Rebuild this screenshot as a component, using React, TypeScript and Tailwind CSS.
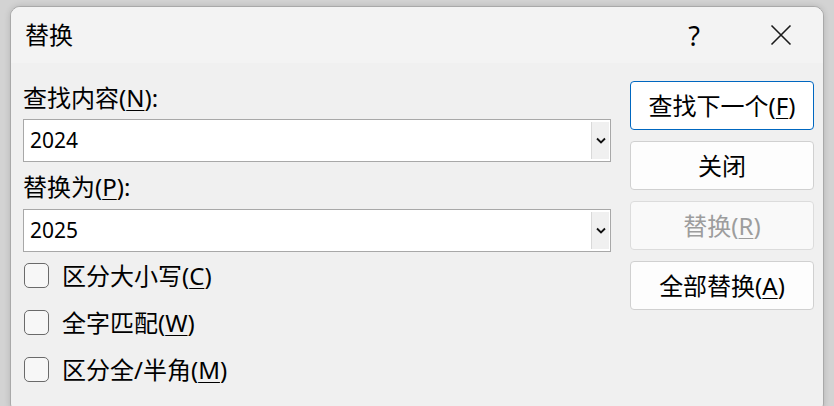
import React from 'react';

const FONT = { fontFamily: '"Noto Sans", "Noto Sans CJK SC", sans-serif' };

const Key: React.FC<{ k: string }> = ({ k }) => (
  <span className="underline decoration-1 underline-offset-[3px]">{k}</span>
);

const Combo: React.FC<{ value: string }> = ({ value }) => (
  <div className="flex h-[43px] w-full items-stretch border border-[#a8a8a8] bg-white">
    <div className="flex flex-1 items-center pl-[6px] text-[21px] text-black">{value}</div>
    <div className="my-[2px] mr-[1px] flex w-[18px] items-center justify-center border-l border-[#d9d9d9] bg-[#f0f0f0]">
      <svg width="10" height="7" viewBox="0 0 10 7">
        <path d="M1 1.5 L5 5.5 L9 1.5" fill="none" stroke="#111" strokeWidth="1.8" />
      </svg>
    </div>
  </div>
);

const Check: React.FC<{ label: string; k: string }> = ({ label, k }) => (
  <div className="flex h-[47px] items-center">
    <div className="ml-[1px] h-[25px] w-[25px] rounded-[5px] border-[1.5px] border-[#6a6a6a] bg-[#f7f7f7]"></div>
    <span className="ml-[13px] text-[24px] leading-none text-black">
      {label}(<Key k={k} />)
    </span>
  </div>
);

const Btn: React.FC<{ children: React.ReactNode; primary?: boolean; disabled?: boolean }> = ({
  children,
  primary,
  disabled,
}) => (
  <button
    className={`flex h-[49px] w-full items-center justify-center rounded-[4px] text-[24px] leading-none ${
      primary
        ? 'border border-[#0067c0] bg-white text-black'
        : disabled
        ? 'border border-[#dcdcdc] bg-[#f9f9f9] text-[#9d9d9d]'
        : 'border border-[#d0d0d0] bg-[#fdfdfd] text-black'
    }`}
  >
    {children}
  </button>
);

const App: React.FC = () => {
  return (
    <div className="h-[406px] w-[834px] overflow-hidden bg-[#d3d3d3] pl-[10px] pr-[10px] pt-[6px]" style={FONT}>
      <div className="flex h-[408px] flex-col overflow-hidden rounded-[10px] border border-[#a9a9a9] bg-[#f0f0f0] shadow-[0_0_6px_rgba(0,0,0,0.15)]">
        {/* Title bar */}
        <div className="flex h-[56px] items-center bg-[#f3f3f3] pl-[14px]">
          <span className="text-[24px] leading-none text-black">替换</span>
          <span className="ml-auto mr-[70px] text-[27px] leading-none text-black">?</span>
          <svg className="mr-[31px]" width="22" height="22" viewBox="0 0 22 22">
            <path d="M1.5 1.5 L20.5 20.5 M20.5 1.5 L1.5 20.5" stroke="#1a1a1a" strokeWidth="1.6" fill="none" />
          </svg>
        </div>

        {/* Body */}
        <div className="flex pl-[12px] pr-[9px] pt-[18px]">
          <div className="flex flex-1 flex-col">
            <div className="mt-[1px] flex h-[32px] items-center text-[24px] leading-none text-black">
              查找内容(<Key k="N" />):
            </div>
            <div className="mt-[5px]">
              <Combo value="2024" />
            </div>
            <div className="mt-[9px] flex h-[32px] items-center text-[24px] leading-none text-black">
              替换为(<Key k="P" />):
            </div>
            <div className="mt-[6px]">
              <Combo value="2025" />
            </div>
            <Check label="区分大小写" k="C" />
            <Check label="全字匹配" k="W" />
            <Check label="区分全/半角" k="M" />
          </div>

          <div className="ml-[19px] flex w-[184px] flex-col gap-[11px]">
            <Btn primary>
              查找下一个(<Key k="F" />)
            </Btn>
            <Btn>关闭</Btn>
            <Btn disabled>
              替换(<Key k="R" />)
            </Btn>
            <Btn>
              全部替换(<Key k="A" />)
            </Btn>
          </div>
        </div>
      </div>
    </div>
  );
};

export default App;
